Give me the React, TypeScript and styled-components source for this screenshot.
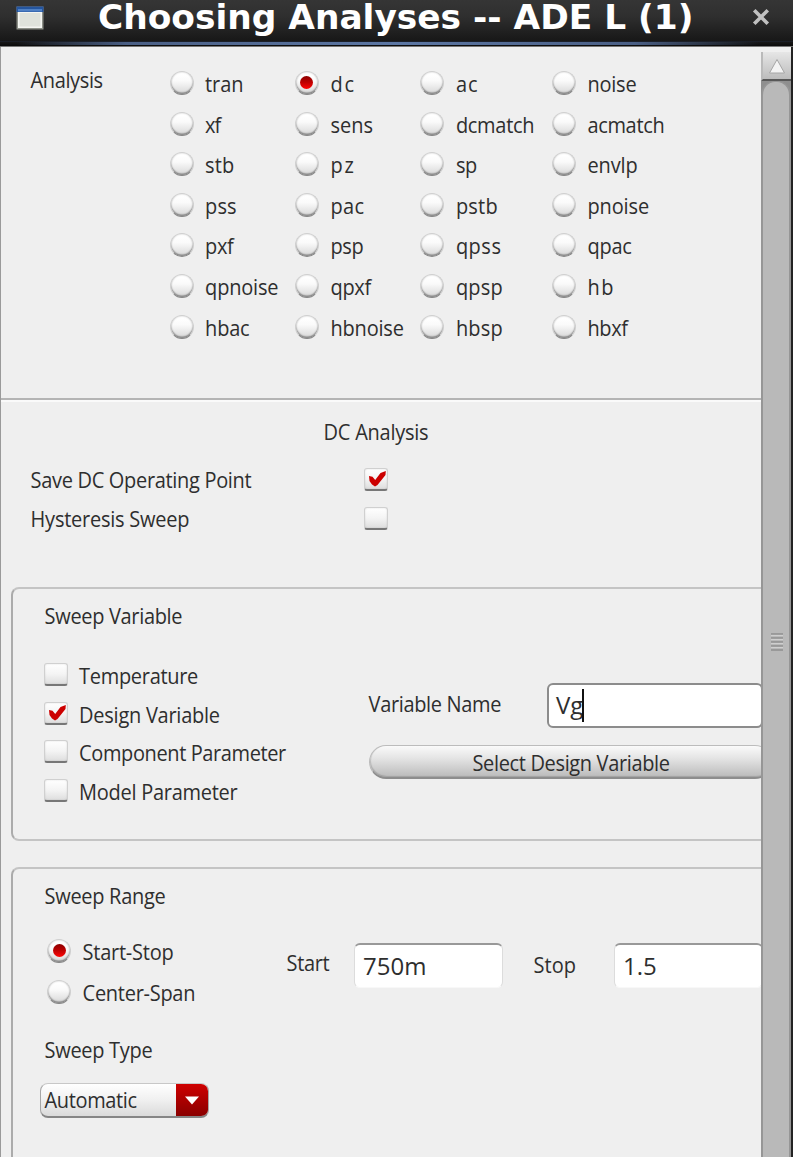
import React from 'react';
import styled, { createGlobalStyle, css } from 'styled-components';

const GlobalStyle = createGlobalStyle`
  *, *::before, *::after { box-sizing: border-box; }
  body { margin: 0; background: #efefef; overflow: hidden; }
`;

const Window = styled.div`
  display: flex;
  flex-direction: column;
  width: 793px;
  height: 1157px;
  overflow: hidden;
  background: #efefef;
  color: #2e2e2e;
  font-family: 'Open Sans', 'Noto Sans', sans-serif;
  font-size: 20px;
`;

const TitleBar = styled.header`
  flex: none;
  display: flex;
  flex-direction: column;
  height: 47px;
  border-bottom: 1px solid #777;
  background: linear-gradient(#353535, #2f2f2f 35%, #161616 92%, #0a0a0a);
`;

const TitleRow = styled.div`
  display: flex;
  align-items: flex-start;
  height: 41px;
`;

const TitleIcon = styled.svg`
  flex: none;
  width: 28px;
  height: 24px;
  margin: 6px 0 0 16px;
`;

const Title = styled.h1`
  margin: 0 0 0 54px;
  width: 597px;
  font: bold 34.4px/34px 'DejaVu Sans', sans-serif;
  color: #fff;
  white-space: nowrap;
`;

const CloseIcon = styled.svg`
  flex: none;
  width: 18px;
  height: 18px;
  margin: 8px 0 0 57px;
`;

const TitleGlow = styled.div`
  height: 4px;
  background: linear-gradient(90deg, transparent 2%, #4a5f85 16%, #5c77a4 50%, #4a5f85 80%, transparent 96%);
  border-top: 1px solid #1b1f28;
`;

const Body = styled.main`
  flex: 1;
  display: flex;
  min-height: 0;
  border-right: 2px solid #232323;
`;

const Pane = styled.div`
  width: 761px;
  flex: none;
  overflow: hidden;
  border-left: 1px solid #9a9a9a;
`;

const Text = styled.span<{ $track?: number }>`
  display: inline-block;
  line-height: 28px;
  white-space: nowrap;
  letter-spacing: ${(p) => p.$track ?? 0}px;
  transform: translate(0.6px, 0.8px) scaleY(1.05);
`;

const AnalysisSection = styled.section`
  display: flex;
  height: 353px;
  padding: 16px 0 0 29px;
  border-bottom: 2px solid #b4b4b4;
  box-shadow: 0 2px 0 #fafafa;
`;

const AnalysisLabel = styled.div`
  width: 139.5px;
  padding-top: 3px;
`;

const RadioGrid = styled.div`
  display: grid;
  grid-template-columns: 125.4px 125.4px 131.5px 110px;
  grid-auto-rows: 40.55px;
`;

const Option = styled.label<{ $gap: number; $height?: number }>`
  display: flex;
  align-items: center;
  gap: ${(p) => p.$gap}px;
  height: ${(p) => (p.$height ? `${p.$height}px` : 'auto')};

  & > ${Text} { margin-top: 2px; }
`;

const RadioGrip = styled.span`
  flex: none;
  display: flex;
  align-items: center;
  justify-content: center;
  width: 24px;
  height: 24px;
  border: 1px solid #cfcfcf;
  border-bottom-color: #858585;
  border-radius: 50%;
  background: linear-gradient(#fff 10%, #fafafa 40%, #dadada 95%);
  box-shadow: inset 0 -1.5px 1.5px rgba(0, 0, 0, 0.36), inset 0 0 2px rgba(0, 0, 0, 0.2);
`;

const RadioDot = styled.span`
  width: 13px;
  height: 13px;
  margin-top: -2px;
  border-radius: 50%;
  background: linear-gradient(#8c0000, #c00000 50%, #ff0505);
`;

const CheckBox = styled.span`
  flex: none;
  display: flex;
  width: 24px;
  height: 23px;
  margin-top: -1px;
  border: 1px solid #d0d0d0;
  border-bottom: 2px solid #777;
  border-radius: 3px;
  background: linear-gradient(#fff, #f4f4f4 50%, #dedede);
  box-shadow: inset 0 0 2px rgba(0, 0, 0, 0.14);
`;

const Tick = styled.svg`
  width: 17px;
  height: 16px;
  margin: 2px 0 0 4px;
`;

const DcSection = styled.section`
  height: 187px;
  padding: 18px 0 0 29px;
`;

const DcHeading = styled.div`
  height: 43px;
  padding-left: 293px;
`;

const DcRow = styled.div`
  display: grid;
  grid-template-columns: 334px 30px;
  align-items: center;
  height: 38.5px;
`;

const Group = styled.section<{ $height: number; $open?: boolean }>`
  width: 790px;
  height: ${(p) => p.$height}px;
  margin: 0 0 26px 10px;
  border: 2px solid #c4c4c4;
  border-left-color: #ababab;
  border-radius: 8px;
  padding: 13px 0 0 31px;
  ${(p) => p.$open && css`
    border-bottom: 0;
    border-bottom-left-radius: 0;
  `}
`;

const GroupTitle = styled.div`
  height: 28px;
`;

const VariableColumns = styled.div`
  display: flex;
  padding-top: 26px;
`;

const CheckList = styled.div`
  width: 324px;
  flex: none;
`;

const VariableFields = styled.div`
  display: flex;
  flex-direction: column;
  padding-top: 27px;
`;

const FieldRow = styled.div`
  display: flex;
  align-items: flex-start;
`;

const FieldLabel = styled.div<{ $width: number; $drop: number }>`
  flex: none;
  width: ${(p) => p.$width}px;
  padding-top: ${(p) => p.$drop}px;
`;

const Field = styled.div<{ $width: number; $focused?: boolean }>`
  flex: none;
  display: flex;
  align-items: center;
  width: ${(p) => p.$width}px;
  height: 45px;
  padding-left: 8px;
  border: 1px solid #dcdcdc;
  border-top: 2px solid #999;
  border-bottom-color: #f8f8f8;
  border-radius: 6px;
  background: #fff;
  font-size: 24px;
  line-height: 34px;
  ${(p) => p.$focused && css`
    padding-left: 7px;
    padding-bottom: 1px;
    border: 2px solid #8c8c8c;
  `}
`;

const Caret = styled.span`
  width: 2px;
  height: 33px;
  margin-left: -1px;
  background: #111;
`;

const PillButton = styled.button`
  width: 403px;
  height: 34px;
  margin: 17px 0 0 1px;
  padding: 2px 0 0;
  border: 1px solid #bcbcbc;
  border-bottom: 2px solid #8d8d8d;
  border-radius: 17px;
  background: linear-gradient(#fafafa, #e4e4e4 40%, #bebebe 95%);
  box-shadow: inset 1px -1px 1px rgba(0, 0, 0, 0.15);
  color: inherit;
  font: inherit;
  line-height: 28px;
`;

const RangeRow = styled.div`
  display: flex;
  padding-top: 19px;
`;

const RadioList = styled.div`
  width: 242px;
  flex: none;
  padding: 2px 0 0 3px;
`;

const RangeFields = styled.div`
  display: flex;
  align-items: flex-start;
  padding-top: 14px;
`;

const FieldSlot = styled.div`
  flex: none;
  padding-right: 30px;
`;

const TypeTitle = styled.div`
  height: 28px;
  margin-top: 24px;
`;

const Combo = styled.div`
  display: flex;
  width: 169px;
  height: 35px;
  margin: 19px 0 0 -4px;
  border: 1px solid #a6a6a6;
  border-top-color: #c8c8c8;
  border-bottom: 2px solid #858585;
  border-radius: 8px;
  overflow: hidden;
  background: linear-gradient(#fff, #f0f0f0 50%, #dadada);
`;

const ComboValue = styled.div`
  width: 135px;
  padding: 2px 0 0 3px;
`;

const ComboArrow = styled.div`
  flex: 1;
  display: flex;
  align-items: center;
  justify-content: center;
  background: linear-gradient(#cf0000, #a80000 55%, #8a0000);
`;

const ScrollBar = styled.div`
  flex: 1;
  display: flex;
  flex-direction: column;
  margin-top: 5px;
`;

const ScrollUp = styled.div`
  flex: none;
  display: flex;
  justify-content: center;
  height: 29px;
  padding-top: 6px;
  border-bottom: 2px solid #585858;
  border-left: 2px solid #bababa;
  background: linear-gradient(#e6e6e6, #bcbcbc);
`;

const Track = styled.div`
  flex: 1;
  background: #8f8f8f;
`;

const Thumb = styled.div`
  display: flex;
  justify-content: center;
  height: 100%;
  padding: 551px 0 0 1px;
  border: 2px solid #969696;
  border-width: 1px 2px 0;
  border-radius: 14px 14px 0 0;
  background: #b9b9b9;
`;

function Radio({ on }: { on?: boolean }) {
  return <RadioGrip>{on && <RadioDot />}</RadioGrip>;
}

function Check({ on }: { on?: boolean }) {
  return (
    <CheckBox>
      {on && (
        <Tick viewBox="0 0 17 16">
          <path d="M0 5 L3.5 5.8 L6.2 9 L11.5 2 L16.8 0 L16.5 4 L8.5 14 L6 15.5 L3 13.5 L0.5 10 Z" fill="#cc0000" />
        </Tick>
      )}
    </CheckBox>
  );
}

/* Analysis name and its letter spacing in px */
const analyses: [string, number][] = [
  ['tran', -0.13], ['dc', 1.8], ['ac', 0.9], ['noise', -0.22],
  ['xf', -1], ['sens', 0], ['dcmatch', -0.3], ['acmatch', -0.33],
  ['stb', 0.15], ['pz', 1.8], ['sp', -0.5], ['envlp', -0.12],
  ['pss', 0.1], ['pac', 0.35], ['pstb', 0.2], ['pnoise', -0.1],
  ['pxf', -0.35], ['psp', -0.4], ['qpss', 0.5], ['qpac', -0.2],
  ['qpnoise', -0.2], ['qpxf', -0.3], ['qpsp', 0.2], ['hb', 1.7],
  ['hbac', -0.2], ['hbnoise', -0.2], ['hbsp', 0.2], ['hbxf', -0.33],
];

const variables: [string, number][] = [
  ['Temperature', -0.31],
  ['Design Variable', -0.26],
  ['Component Parameter', -0.39],
  ['Model Parameter', -0.28],
];

export default function App() {
  return (
    <Window>
      <GlobalStyle />
      <TitleBar>
        <TitleRow>
          <TitleIcon viewBox="0 0 28 24">
            <rect x="0.5" y="0.5" width="27" height="23" fill="#8d9088" />
            <rect x="0.5" y="0.5" width="27" height="5.5" fill="#24559f" />
            <rect x="2" y="3" width="24" height="2.5" fill="#4f80c4" />
            <rect x="2" y="6" width="24" height="16" fill="#f4f5f1" />
            <rect x="3.5" y="7" width="21" height="13.5" fill="#dfe2db" />
          </TitleIcon>
          <Title>Choosing Analyses -- ADE L (1)</Title>
          <CloseIcon viewBox="0 0 18 18">
            <path d="M3.5 3.5 L14.5 14.5 M14.5 3.5 L3.5 14.5" stroke="#c0c0c0" strokeWidth="3.6" strokeLinecap="square" />
          </CloseIcon>
        </TitleRow>
        <TitleGlow />
      </TitleBar>
      <Body>
        <Pane>
          <AnalysisSection>
            <AnalysisLabel><Text $track={-0.39}>Analysis</Text></AnalysisLabel>
            <RadioGrid>
              {analyses.map(([name, track]) => (
                <Option key={name} $gap={11}>
                  <Radio on={name === 'dc'} />
                  <Text $track={track}>{name}</Text>
                </Option>
              ))}
            </RadioGrid>
          </AnalysisSection>
          <DcSection>
            <DcHeading><Text $track={-0.25}>DC Analysis</Text></DcHeading>
            <DcRow><Text $track={-0.32}>Save DC Operating Point</Text><Check on /></DcRow>
            <DcRow><Text $track={-0.24}>Hysteresis Sweep</Text><Check /></DcRow>
          </DcSection>
          <Group $height={254}>
            <GroupTitle><Text $track={-0.33}>Sweep Variable</Text></GroupTitle>
            <VariableColumns>
              <CheckList>
                {variables.map(([name, track]) => (
                  <Option key={name} $gap={10.5} $height={38.6}>
                    <Check on={name === 'Design Variable'} />
                    <Text $track={track}>{name}</Text>
                  </Option>
                ))}
              </CheckList>
              <VariableFields>
                <FieldRow>
                  <FieldLabel $width={179} $drop={7}><Text $track={-0.35}>Variable Name</Text></FieldLabel>
                  <Field $width={216} $focused>Vg<Caret /></Field>
                </FieldRow>
                <PillButton><Text $track={-0.35}>Select Design Variable</Text></PillButton>
              </VariableFields>
            </VariableColumns>
          </Group>
          <Group $height={320} $open>
            <GroupTitle><Text $track={-0.31}>Sweep Range</Text></GroupTitle>
            <RangeRow>
              <RadioList>
                <Option $gap={11} $height={40.5}><Radio on /><Text $track={-0.25}>Start-Stop</Text></Option>
                <Option $gap={11} $height={40.5}><Radio /><Text $track={-0.28}>Center-Span</Text></Option>
              </RadioList>
              <RangeFields>
                <FieldLabel $width={68} $drop={6}><Text $track={-0.35}>Start</Text></FieldLabel>
                <FieldSlot><Field $width={149}>750m</Field></FieldSlot>
                <FieldLabel $width={81} $drop={8}><Text>Stop</Text></FieldLabel>
                <Field $width={149}>1.5</Field>
              </RangeFields>
            </RangeRow>
            <TypeTitle><Text $track={-0.31}>Sweep Type</Text></TypeTitle>
            <Combo>
              <ComboValue><Text $track={-0.38}>Automatic</Text></ComboValue>
              <ComboArrow>
                <svg width="14" height="9" viewBox="0 0 14 9"><path d="M0 0.5 H14 L7 8.5 Z" fill="#fff" /></svg>
              </ComboArrow>
            </Combo>
          </Group>
        </Pane>
        <ScrollBar>
          <ScrollUp>
            <svg width="18" height="16" viewBox="0 0 18 16">
              <path d="M9 1.5 L16.5 15 H1.5 Z" fill="#f3f3f3" stroke="#a6a6a6" />
            </svg>
          </ScrollUp>
          <Track>
            <Thumb>
              <svg width="12" height="18" viewBox="0 0 12 18">
                <path d="M0 1 H12 M0 5 H12 M0 9 H12 M0 13 H12 M0 17 H12" stroke="#8e8e8e" strokeWidth="1.4" />
                <path d="M0 2.4 H12 M0 6.4 H12 M0 10.4 H12 M0 14.4 H12" stroke="#d2d2d2" strokeWidth="1" />
              </svg>
            </Thumb>
          </Track>
        </ScrollBar>
      </Body>
    </Window>
  );
}
